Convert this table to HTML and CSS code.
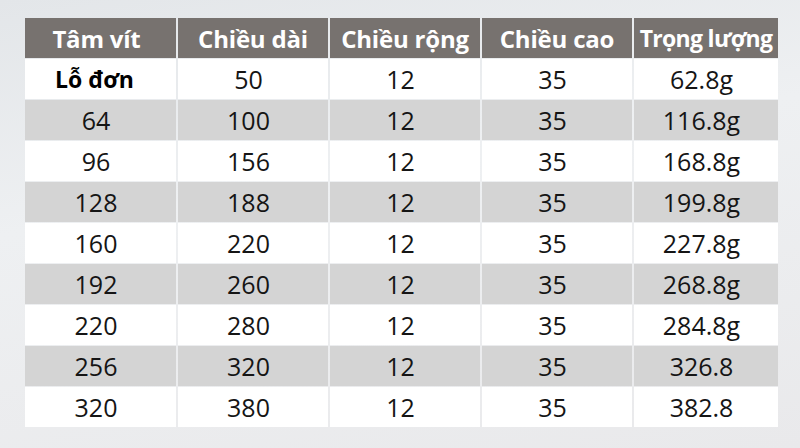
FILE: index.html
```html
<!DOCTYPE html>
<html lang="vi">
<head>
<meta charset="utf-8">
<link rel="stylesheet" href="styles.css">
</head>
<body>
<div class="page">
  <div class="grid">
    <div class="h first">Tâm vít</div><div class="h">Chiều dài</div><div class="h">Chiều rộng</div><div class="h">Chiều cao</div><div class="h tight">Trọng lượng</div>
    <div class="c b">Lỗ đơn</div><div class="c">50</div><div class="c">12</div><div class="c">35</div><div class="c">62.8g</div>
    <div class="c g">64</div><div class="c g">100</div><div class="c g">12</div><div class="c g">35</div><div class="c g">116.8g</div>
    <div class="c">96</div><div class="c">156</div><div class="c">12</div><div class="c">35</div><div class="c">168.8g</div>
    <div class="c g">128</div><div class="c g">188</div><div class="c g">12</div><div class="c g">35</div><div class="c g">199.8g</div>
    <div class="c">160</div><div class="c">220</div><div class="c">12</div><div class="c">35</div><div class="c">227.8g</div>
    <div class="c g">192</div><div class="c g">260</div><div class="c g">12</div><div class="c g">35</div><div class="c g">268.8g</div>
    <div class="c">220</div><div class="c">280</div><div class="c">12</div><div class="c">35</div><div class="c">284.8g</div>
    <div class="c g">256</div><div class="c g">320</div><div class="c g">12</div><div class="c g">35</div><div class="c g">326.8</div>
    <div class="c">320</div><div class="c">380</div><div class="c">12</div><div class="c">35</div><div class="c">382.8</div>
  </div>
</div>
</body>
</html>
```

FILE: styles.css
```css
html, body {
  margin: 0;
  padding: 0;
}
body {
  width: 800px;
  height: 448px;
  overflow: hidden;
  background: linear-gradient(170deg, #e3e6e9 0%, #eef0f2 40%, #e9e9eb 100%);
}
.page {
  padding: 18px 0 0 25px;
}
.grid {
  display: grid;
  grid-template-columns: 151px 150px 150px 150px 144px;
  grid-auto-rows: 40px;
  column-gap: 2px;
  row-gap: 1px;
}
.h {
  background: #77726f;
  color: #ffffff;
  font-family: "Open Sans", "Noto Sans", sans-serif;
  font-weight: 700;
  font-size: 24px;
  display: flex;
  align-items: center;
  justify-content: center;
  white-space: nowrap;
  letter-spacing: -0.2px;
}
.h.first {
  padding-right: 8px;
}
.h.tight {
  font-size: 23px;
  letter-spacing: -0.7px;
}
.c {
  background: #ffffff;
  color: #151515;
  font-family: "Open Sans", "Noto Sans", sans-serif;
  font-size: 25px;
  display: flex;
  align-items: center;
  justify-content: center;
  padding-right: 9px;
}
.c.g {
  background: #d4d4d4;
}
.c.b {
  font-weight: 700;
  font-size: 23px;
  color: #000;
  padding-right: 12px;
}
```
